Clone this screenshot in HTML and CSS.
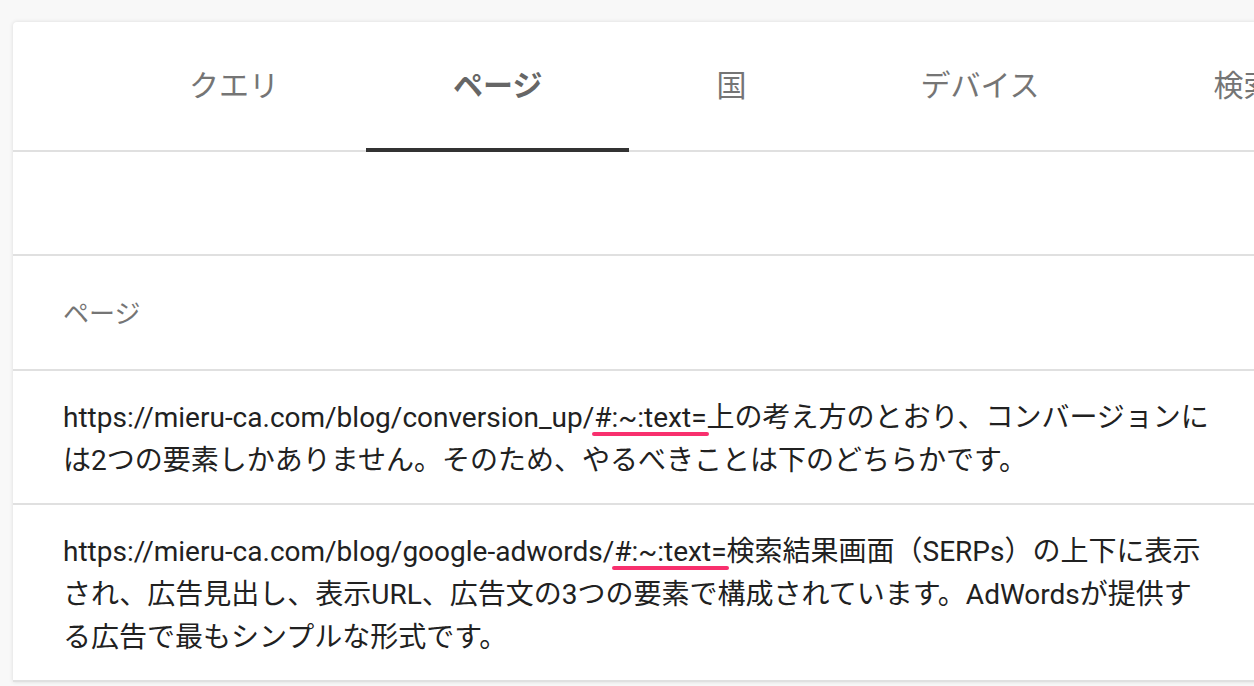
FILE: index.html
```html
<!DOCTYPE html>
<html lang="ja">
<head>
  <meta charset="UTF-8" />
  <meta name="viewport" content="width=device-width, initial-scale=1.0" />
  <title>ページ</title>
  <link rel="stylesheet" href="styles.css">
</head>
<body>
  <div class="card">
    <nav class="tabs">
      <div class="tab">クエリ</div>
      <div class="tab active">ページ</div>
      <div class="tab">国</div>
      <div class="tab">デバイス</div>
      <div class="tab">検索での見え方</div>
    </nav>

    <div class="filter-row"></div>

    <div class="table">
      <div class="row head">ページ</div>
      <div class="row">
        https://mieru-ca.com/blog/conversion_up/<span class="mark">#:~:text=</span>上の考え方のとおり、コンバージョンには2つの要素しかありません。そのため、やるべきことは下のどちらかです。
      </div>
      <div class="row">
        https://mieru-ca.com/blog/google-adwords/<span class="mark">#:~:text=</span>検索結果画面（SERPs）の上下に表示され、広告見出し、表示URL、広告文の3つの要素で構成されています。AdWordsが提供する広告で最もシンプルな形式です。
      </div>
    </div>
  </div>
</body>
</html>
```

FILE: styles.css
```css
:root {
  --bg: #f8f8f8;
  --line: #e0e0e0;
  --text: #212121;
  --muted: #757575;
  --pink: #f8306e;
}
body {
  margin: 0;
  background: var(--bg);
  font-family: Roboto, "Noto Sans CJK JP", sans-serif;
  color: var(--text);
  overflow: hidden;
  height: 686px;
}
.card {
  margin: 22px 0 0 13px;
  width: 1300px;
  background: #fff;
  border-radius: 4px 0 0 0;
  box-shadow: 0 0 4px rgba(0, 0, 0, 0.12);
}

/* tabs */
.tabs {
  display: flex;
  padding-left: 89px;
  height: 128px;
  border-bottom: 2px solid var(--line);
  white-space: nowrap;
}
.tab {
  padding: 0 87px 4px;
  display: flex;
  align-items: center;
  font-size: 30px;
  color: var(--muted);
  border-bottom: 4px solid transparent;
  margin-bottom: -2px;
}
.tab.active {
  font-weight: bold;
  color: #666;
  border-bottom-color: #333;
}

.filter-row {
  height: 102px;
  border-bottom: 2px solid var(--line);
}

/* table */
.row {
  padding: 25px 101px 21px 50px;
  font-size: 28px;
  line-height: 43px;
  border-bottom: 2px solid var(--line);
}
.row.head {
  font-size: 26px;
  color: var(--muted);
  height: 67px;
  line-height: 67px;
}
.mark {
  position: relative;
}
.mark::after {
  content: "";
  position: absolute;
  left: -2px;
  right: -2px;
  bottom: -2px;
  height: 4px;
  border-radius: 2px;
  background: var(--pink);
}
```
